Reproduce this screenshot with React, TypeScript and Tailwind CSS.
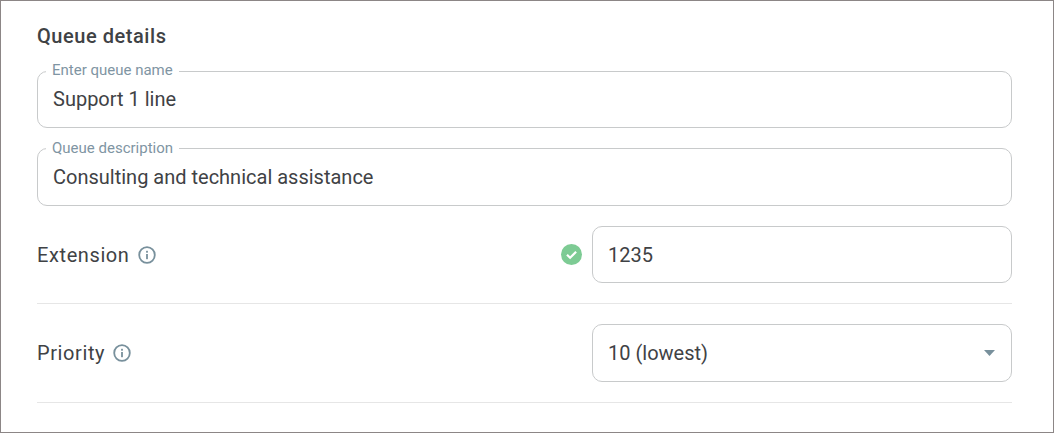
const valueText = "text-[20px] leading-[24px] text-[#3f4245]";
const rowLabel = "text-[20px] leading-[24px] tracking-[0.6px] text-[#3f4245]";

function InfoIcon() {
  return (
    <svg width="18" height="18" viewBox="0 0 18 18" fill="none" className="shrink-0">
      <circle cx="9" cy="9" r="7.8" stroke="#78909c" strokeWidth="1.8" />
      <rect x="8.1" y="8" width="1.8" height="5.2" fill="#78909c" />
      <rect x="8.1" y="4.8" width="1.8" height="1.9" fill="#78909c" />
    </svg>
  );
}

function FloatingField({ label, value }: { label: string; value: string }) {
  return (
    <div className="relative flex h-[57.6px] items-center rounded-[10px] border border-[#c8cacb] pl-[15px]">
      <span className="absolute -top-[10.6px] left-[8px] bg-white px-[6px] text-[15px] leading-[18px] text-[#7f95a3]">
        {label}
      </span>
      <span className={valueText}>{value}</span>
    </div>
  );
}

export default function App() {
  return (
    <div
      className="h-[433px] w-[1054px] overflow-hidden border border-[#8c8686] bg-white pl-[36px] pr-[41px] pt-[23px]"
      style={{ fontFamily: "Roboto, sans-serif" }}
    >
      <h2 className="text-[20px] font-medium leading-[24px] tracking-[0.55px] text-[#3f4245]">Queue details</h2>

      <div className="mt-[22.6px] flex flex-col gap-[20px]">
        <FloatingField label="Enter queue name" value="Support 1 line" />
        <FloatingField label="Queue description" value="Consulting and technical assistance" />
      </div>

      <div className="mt-[20px] flex items-center justify-between border-b border-[#e6e6e6] pb-[20px]">
        <div className="flex items-center gap-[8px]">
          <span className={rowLabel}>Extension</span>
          <InfoIcon />
        </div>
        <div className="flex items-center gap-[10px]">
          <svg width="21" height="21" viewBox="0 0 21 21" fill="none">
            <circle cx="10.5" cy="10.5" r="10.5" fill="#7dcb94" />
            <path d="M6 10.8l3.1 3 6-6" stroke="#fff" strokeWidth="2.2" />
          </svg>
          <div className={`flex h-[57.6px] w-[420px] items-center rounded-[10px] border border-[#c8cacb] pl-[15px] ${valueText}`}>
            1235
          </div>
        </div>
      </div>

      <div className="mt-[20px] flex items-center justify-between border-b border-[#e6e6e6] pb-[20px]">
        <div className="flex items-center gap-[8px]">
          <span className={rowLabel}>Priority</span>
          <InfoIcon />
        </div>
        <div className={`flex h-[57.6px] w-[420px] items-center justify-between rounded-[10px] border border-[#c8cacb] pl-[15px] pr-[16px] ${valueText}`}>
          <span>10 (lowest)</span>
          <svg width="11" height="6" viewBox="0 0 11 6">
            <path d="M0 0h11L5.5 6z" fill="#78909c" />
          </svg>
        </div>
      </div>
    </div>
  );
}
